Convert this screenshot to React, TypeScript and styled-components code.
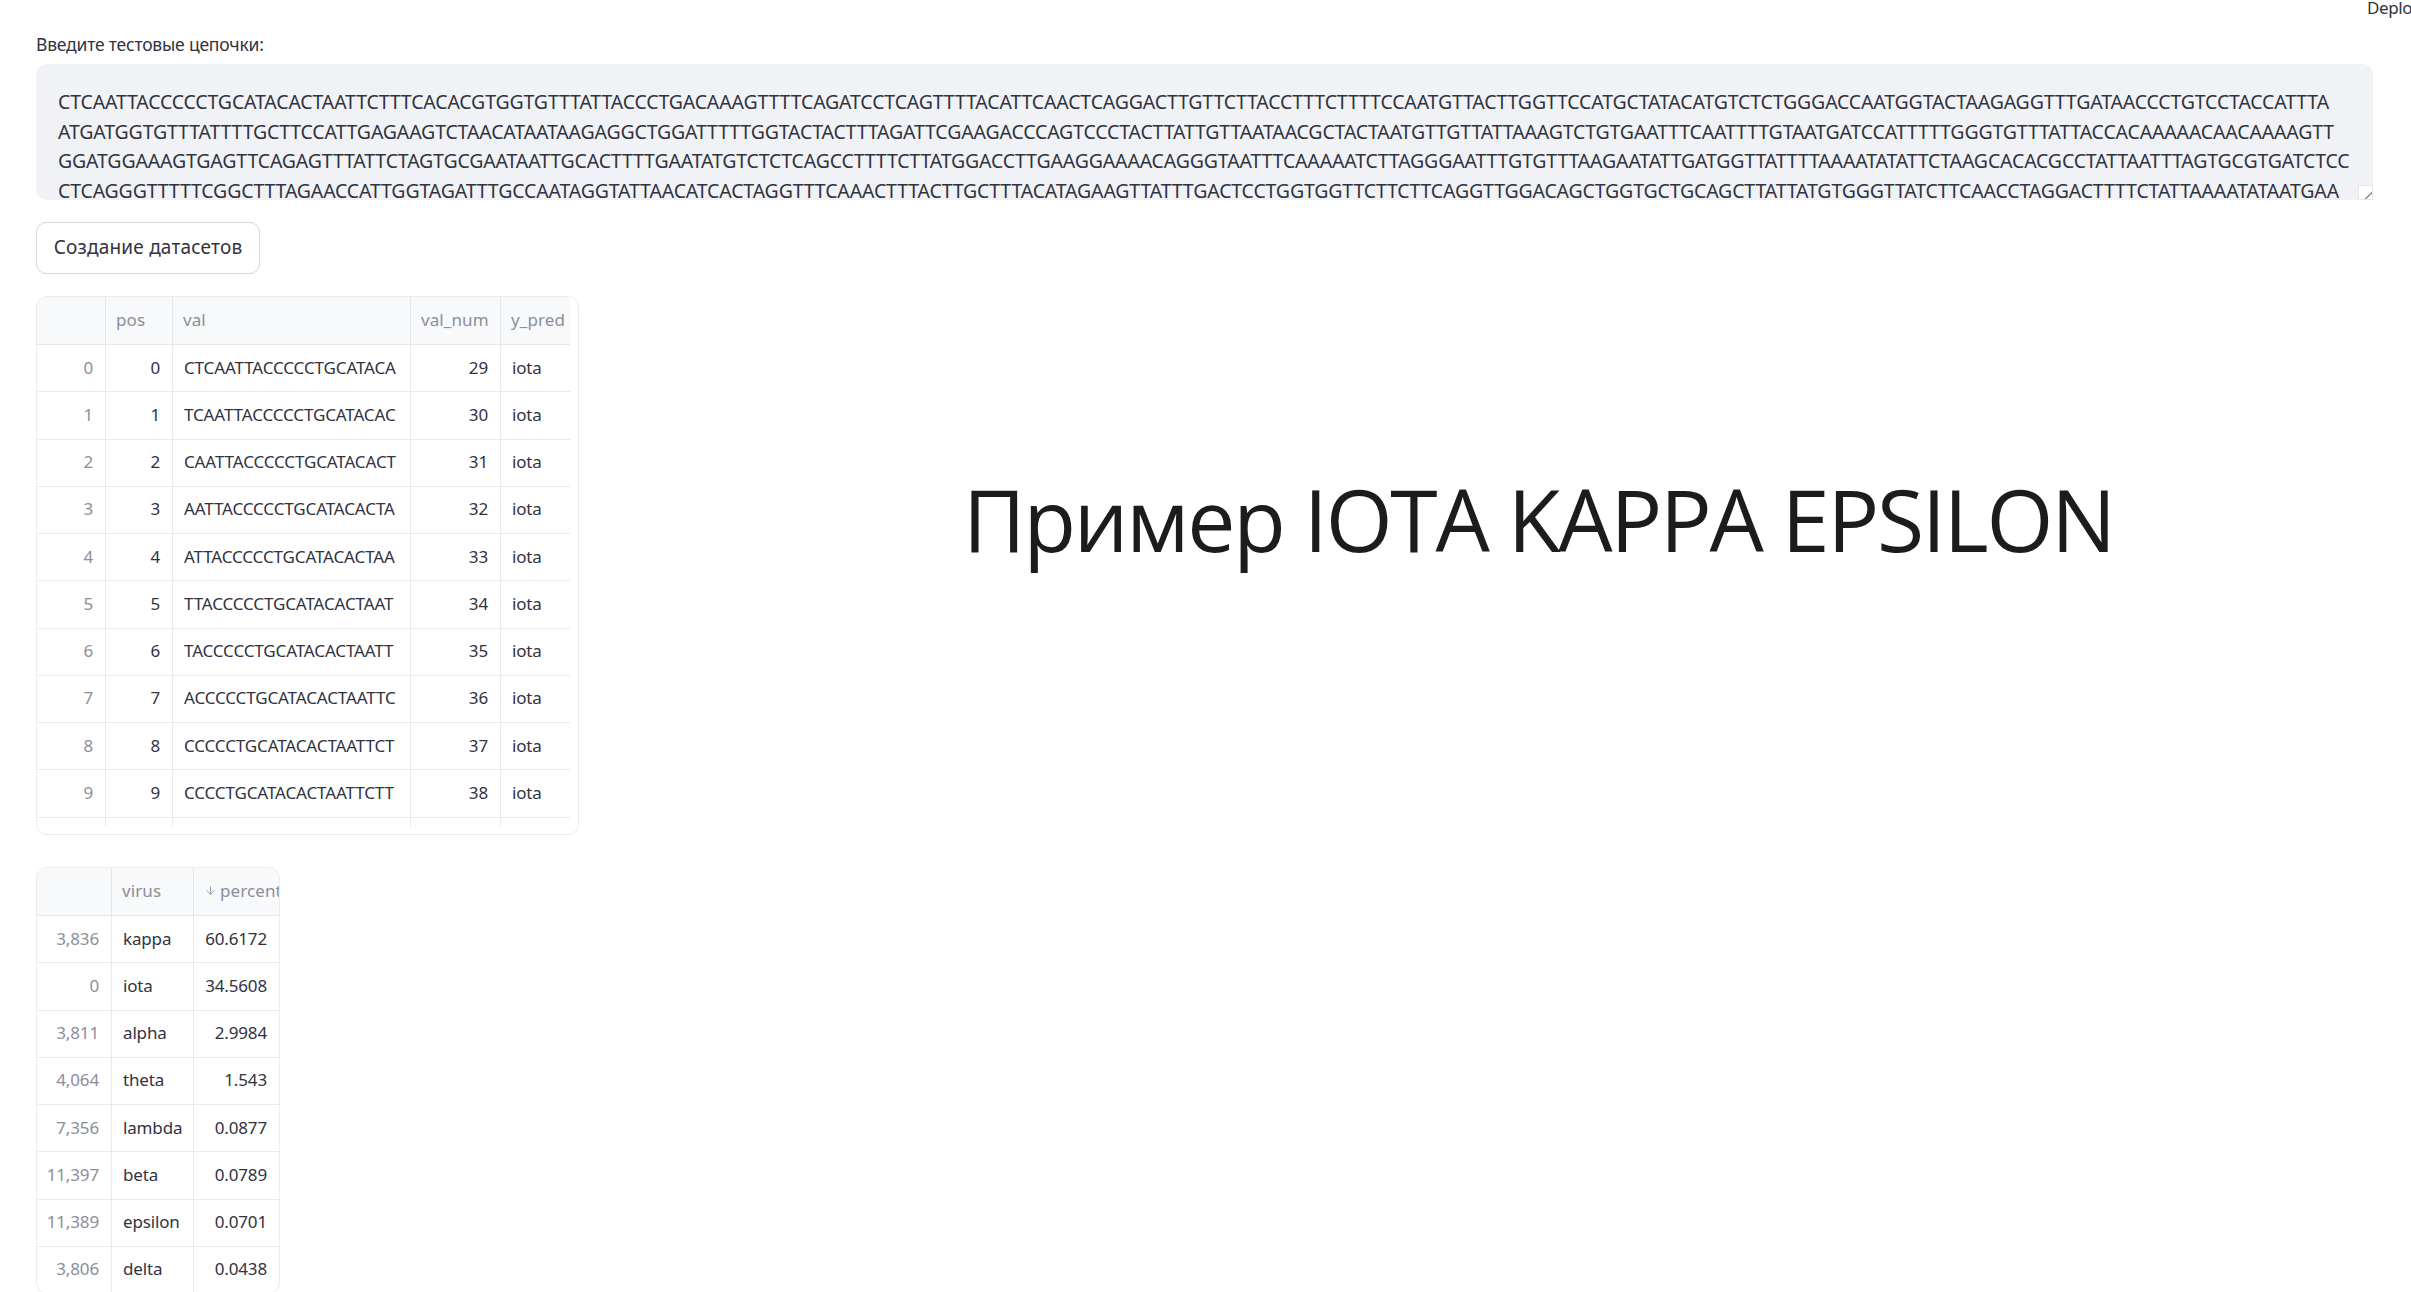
import React from "react";
import styled, {createGlobalStyle} from "styled-components";
import {ArrowDown} from "lucide-react";

const SEQUENCES = [
  "CTCAATTACCCCCTGCATACACTAATTCTTTCACACGTGGTGTTTATTACCCTGACAAAGTTTTCAGATCCTCAGTTTTACATTCAACTCAGGACTTGTTCTTACCTTTCTTTTCCAATGTTACTTGGTTCCATGCTATACATGTCTCTGGGACCAATGGTACTAAGAGGTTTGATAACCCTGTCCTACCATTTA",
  "ATGATGGTGTTTATTTTGCTTCCATTGAGAAGTCTAACATAATAAGAGGCTGGATTTTTGGTACTACTTTAGATTCGAAGACCCAGTCCCTACTTATTGTTAATAACGCTACTAATGTTGTTATTAAAGTCTGTGAATTTCAATTTTGTAATGATCCATTTTTGGGTGTTTATTACCACAAAAACAACAAAAGTT",
  "GGATGGAAAGTGAGTTCAGAGTTTATTCTAGTGCGAATAATTGCACTTTTGAATATGTCTCTCAGCCTTTTCTTATGGACCTTGAAGGAAAACAGGGTAATTTCAAAAATCTTAGGGAATTTGTGTTTAAGAATATTGATGGTTATTTTAAAATATATTCTAAGCACACGCCTATTAATTTAGTGCGTGATCTCC",
  "CTCAGGGTTTTTCGGCTTTAGAACCATTGGTAGATTTGCCAATAGGTATTAACATCACTAGGTTTCAAACTTTACTTGCTTTACATAGAAGTTATTTGACTCCTGGTGGTTCTTCTTCAGGTTGGACAGCTGGTGCTGCAGCTTATTATGTGGGTTATCTTCAACCTAGGACTTTTCTATTAAAATATAATGAA",
];

const WINDOWS = [
  "CTCAATTACCCCCTGCATACA",
  "TCAATTACCCCCTGCATACAC",
  "CAATTACCCCCTGCATACACT",
  "AATTACCCCCTGCATACACTA",
  "ATTACCCCCTGCATACACTAA",
  "TTACCCCCTGCATACACTAAT",
  "TACCCCCTGCATACACTAATT",
  "ACCCCCTGCATACACTAATTC",
  "CCCCCTGCATACACTAATTCT",
  "CCCCTGCATACACTAATTCTT",
];

const VIRUSES = [
  {id: "3,836", virus: "kappa", percent: "60.6172"},
  {id: "0", virus: "iota", percent: "34.5608"},
  {id: "3,811", virus: "alpha", percent: "2.9984"},
  {id: "4,064", virus: "theta", percent: "1.543"},
  {id: "7,356", virus: "lambda", percent: "0.0877"},
  {id: "11,397", virus: "beta", percent: "0.0789"},
  {id: "11,389", virus: "epsilon", percent: "0.0701"},
  {id: "3,806", virus: "delta", percent: "0.0438"},
];

const GlobalStyle = createGlobalStyle`
  html, body {
    margin: 0;
    height: 1292px;
    overflow: hidden;
    background: #fff;
  }
  * {
    box-sizing: border-box;
  }
`;

const Page = styled.div`
  position: relative;
  height: 1292px;
  overflow: hidden;
  padding: 32px 38px 0 36px;
  font-family: "Noto Sans", sans-serif;
  color: #31333f;
`;

const DeployLink = styled.div`
  position: absolute;
  top: -4px;
  right: 0;
  width: 44px;
  overflow: hidden;
  white-space: nowrap;
  font-size: 17px;
  letter-spacing: -0.4px;
  line-height: 24px;
`;

const FieldLabel = styled.label`
  display: block;
  height: 24px;
  margin-bottom: 8px;
  font-size: 17.5px;
  line-height: 24px;
  letter-spacing: -0.2px;
`;

const SequenceInput = styled.textarea`
  display: block;
  width: 100%;
  height: 136px;
  margin-bottom: 22px;
  padding: 23px 22px 0;
  border: 0;
  border-radius: 10px;
  background: #f0f2f6;
  color: #31333f;
  font-family: "Noto Sans", sans-serif;
  font-size: 19.5px;
  line-height: 29.6px;
  letter-spacing: -0.15px;
  white-space: pre;
  overflow: hidden;
  outline: none;
  resize: vertical;
  &::-webkit-resizer {
    width: 8px;
    height: 8px;
    background: linear-gradient(135deg, #fff 70%, #8b8e9b 70%, #8b8e9b 80%, #fff 80%);
    border: 1px solid #e6e7eb;
  }
`;

const ActionButton = styled.button`
  display: block;
  width: 224px;
  height: 52px;
  margin-bottom: 22px;
  padding: 0 0 2px;
  border: 1px solid #d6d7dc;
  border-radius: 10px;
  background: #fff;
  color: #31333f;
  font-family: "Noto Sans", sans-serif;
  font-size: 19px;
  letter-spacing: 0.2px;
`;

const ContentRow = styled.div`
  display: grid;
  grid-template-columns: 543px 1fr;
`;

const TablesColumn = styled.div`
  display: flex;
  flex-direction: column;
  align-items: flex-start;
  gap: 32px;
`;

const TableFrame = styled.div<{$width: number; $height: number; $gutter: number}>`
  width: ${p => p.$width}px;
  height: ${p => p.$height}px;
  flex: none;
  overflow: hidden;
  border: 1px solid #ebecef;
  border-radius: 11px;
  padding: 0 ${p => p.$gutter}px ${p => p.$gutter}px 0;
  background: #fff;
`;

const TableCanvas = styled.div`
  height: 100%;
  overflow: hidden;
`;

const HeaderRow = styled.div<{$columns: string}>`
  display: grid;
  grid-template-columns: ${p => p.$columns};
  height: 48px;
  background: #f8f9fb;
  border-bottom: 1px solid #e6e7eb;
`;

const BodyRow = styled.div<{$columns: string}>`
  display: grid;
  grid-template-columns: ${p => p.$columns};
  height: 47.25px;
  border-bottom: 1px solid #e9eaed;
`;

const HeaderCell = styled.div`
  display: flex;
  align-items: center;
  gap: 3px;
  padding: 0 0 2px 10px;
  overflow: hidden;
  white-space: nowrap;
  border-right: 1px solid #e6e7eb;
  color: #8b8e9b;
  font-size: 17px;
  letter-spacing: 0.1px;
  &:last-child {
    border-right: 0;
  }
`;

const Cell = styled.div<{$align?: "left" | "right"; $muted?: boolean}>`
  display: flex;
  align-items: center;
  justify-content: ${p => (p.$align === "right" ? "flex-end" : "flex-start")};
  padding: 0 12px 2px 11px;
  overflow: hidden;
  white-space: nowrap;
  border-right: 1px solid #e9eaed;
  color: ${p => (p.$muted ? "#8b8e9b" : "#31333f")};
  font-size: 17px;
  letter-spacing: -0.15px;
  &:last-child {
    border-right: 0;
  }
`;

const SequenceCell = styled(Cell)`
  letter-spacing: -0.12px;
`;

const PicturePane = styled.div`
  padding: 175px 0 0 384px;
`;

const PictureCaption = styled.div`
  font-family: "Open Sans", sans-serif;
  font-size: 86px;
  line-height: 96px;
  letter-spacing: -2.2px;
  color: #1c1c1c;
  white-space: nowrap;
`;

const FRAME_COLUMNS = "69px 67px 238px 90px 1fr";
const VIRUS_COLUMNS = "75px 82px 1fr";

const App = () => {
  return (
    <Page>
      <GlobalStyle />
      <DeployLink>Deploy</DeployLink>
      <FieldLabel>Введите тестовые цепочки:</FieldLabel>
      <SequenceInput readOnly wrap="off" value={SEQUENCES.join("\n")} />
      <ActionButton>Создание датасетов</ActionButton>
      <ContentRow>
        <TablesColumn>
          <TableFrame $width={543} $height={539} $gutter={8}>
            <TableCanvas>
              <HeaderRow $columns={FRAME_COLUMNS}>
                <HeaderCell />
                <HeaderCell>pos</HeaderCell>
                <HeaderCell>val</HeaderCell>
                <HeaderCell>val_num</HeaderCell>
                <HeaderCell>y_pred</HeaderCell>
              </HeaderRow>
              {WINDOWS.map((val, i) => (
                <BodyRow key={val} $columns={FRAME_COLUMNS}>
                  <Cell $align="right" $muted>{i}</Cell>
                  <Cell $align="right">{i}</Cell>
                  <SequenceCell>{val}</SequenceCell>
                  <Cell $align="right">{29 + i}</Cell>
                  <Cell>iota</Cell>
                </BodyRow>
              ))}
              <BodyRow $columns={FRAME_COLUMNS}>
                <Cell />
                <Cell />
                <Cell />
                <Cell />
                <Cell />
              </BodyRow>
            </TableCanvas>
          </TableFrame>
          <TableFrame $width={244} $height={427} $gutter={0}>
            <TableCanvas>
              <HeaderRow $columns={VIRUS_COLUMNS}>
                <HeaderCell />
                <HeaderCell>virus</HeaderCell>
                <HeaderCell>
                  <ArrowDown size={13} strokeWidth={1.5} style={{flex: "none"}} />
                  percentage
                </HeaderCell>
              </HeaderRow>
              {VIRUSES.map(row => (
                <BodyRow key={row.id} $columns={VIRUS_COLUMNS}>
                  <Cell $align="right" $muted>{row.id}</Cell>
                  <Cell>{row.virus}</Cell>
                  <Cell $align="right">{row.percent}</Cell>
                </BodyRow>
              ))}
            </TableCanvas>
          </TableFrame>
        </TablesColumn>
        <PicturePane>
          <PictureCaption>Пример IOTA KAPPA EPSILON</PictureCaption>
        </PicturePane>
      </ContentRow>
    </Page>
  );
};

export default App;
